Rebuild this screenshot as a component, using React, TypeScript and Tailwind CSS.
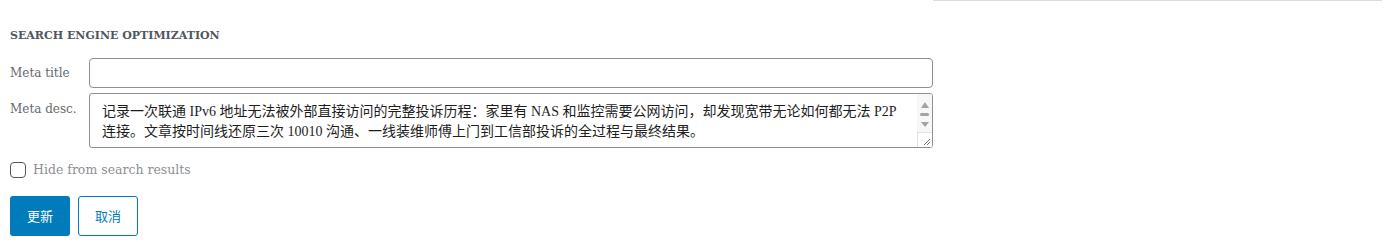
export default function App() {
  const desc =
    '记录一次联通 IPv6 地址无法被外部直接访问的完整投诉历程：家里有 NAS 和监控需要公网访问，却发现宽带无论如何都无法 P2P 连接。文章按时间线还原三次 10010 沟通、一线装维师傅上门到工信部投诉的全过程与最终结果。';

  return (
    <div className="flex w-[1392px] h-[242px] bg-white">
      <div className="w-[933px] shrink-0 pl-[10px] pt-[29px]">
        <h4
          className="text-[11px] leading-[14px] font-bold text-[#50575e]"
          style={{ fontFamily: '"DejaVu Serif", "Noto Sans CJK SC", serif' }}
        >
          SEARCH ENGINE OPTIMIZATION
        </h4>

        <div className="mt-[15px] flex items-center">
          <label
            className="w-[79px] shrink-0 text-[12px] text-[#646970]"
            style={{ fontFamily: '"DejaVu Serif", serif' }}
          >
            Meta title
          </label>
          <input
            type="text"
            className="w-[844px] h-[30px] rounded-[4px] border border-[#8c8f94] px-2 outline-none"
          />
        </div>

        <div className="mt-[5px] flex items-start">
          <label
            className="w-[79px] shrink-0 pt-[7px] text-[12px] text-[#646970]"
            style={{ fontFamily: '"DejaVu Serif", serif' }}
          >
            Meta desc.
          </label>
          <div className="w-[844px] h-[55px] rounded-[3px] border border-[#8c8f94] flex overflow-hidden">
            <textarea
              defaultValue={desc}
              className="flex-1 h-full resize-none pl-[12px] pr-[6px] pt-[8px] text-[14px] leading-[20px] text-[#1e1e1e] outline-none"
              style={{ fontFamily: '"Liberation Serif", "Noto Sans CJK SC", serif' }}
            />
            <div className="w-[15px] h-full flex flex-col bg-[#f7f7f7]">
              <div className="flex-1 flex flex-col items-center pt-[8px]">
                <svg width="8" height="6" viewBox="0 0 8 6">
                  <path d="M4 0 L8 6 L0 6 Z" fill="#a3a3a3" />
                </svg>
                <span className="mt-[5px] w-[9px] h-[3px] rounded-[2px] bg-[#a3a3a3]" />
                <svg className="mt-[6px]" width="8" height="5" viewBox="0 0 8 5">
                  <path d="M0 0 L8 0 L4 5 Z" fill="#a3a3a3" />
                </svg>
              </div>
              <div className="h-[15px] bg-white border-l border-t border-[#e3e3e3] flex items-end justify-end">
                <svg width="8" height="8" viewBox="0 0 8 8" className="mr-[1px] mb-[1px]">
                  <path d="M7 1 L1 7 M7 4 L4 7" stroke="#7a7a7a" strokeWidth="1" />
                </svg>
              </div>
            </div>
          </div>
        </div>

        <label className="mt-[13px] flex items-center gap-[7px]">
          <span className="w-[16px] h-[16px] shrink-0 rounded-[4px] border border-[#50575e] bg-white" />
          <span
            className="text-[12.5px] text-[#8c8f94]"
            style={{ fontFamily: '"DejaVu Serif", serif' }}
          >
            Hide from search results
          </span>
        </label>

        <div
          className="mt-[16px] flex gap-[8px]"
          style={{ fontFamily: '"Noto Sans CJK SC", sans-serif' }}
        >
          <button className="w-[60px] h-[40px] rounded-[3px] bg-[#007cba] text-white text-[13px]">
            更新
          </button>
          <button className="w-[60px] h-[40px] rounded-[3px] border border-[#007cba] bg-white text-[#007cba] text-[13px]">
            取消
          </button>
        </div>
      </div>
      <div className="flex-1 mr-[10px] border-t border-[#dcdcde]" />
    </div>
  );
}
